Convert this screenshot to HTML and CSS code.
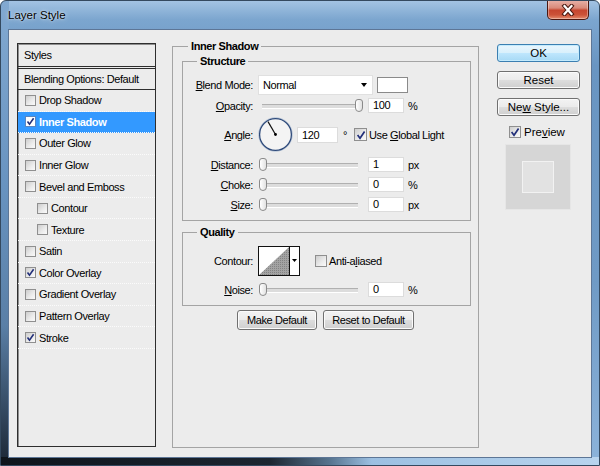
FILE: index.html
```html
<!DOCTYPE html>
<html>
<head>
<meta charset="utf-8">
<title>Layer Style</title>
<link rel="stylesheet" href="styles.css">
</head>
<body>
<div class="window">
  <div class="titlebar">
    <span class="title">Layer Style</span>
    <div class="close">
      <svg width="14" height="12" viewBox="0 0 14 12"><path d="M3.5 2 L10.5 10 M10.5 2 L3.5 10" stroke="#4a1a12" stroke-width="4.2" stroke-linecap="square"/><path d="M3.5 2 L10.5 10 M10.5 2 L3.5 10" stroke="#ffffff" stroke-width="2.2" stroke-linecap="square"/></svg>
    </div>
  </div>
  <div class="client">
    <div class="stylelist">
      <div class="sl-head">Styles</div>
      <div class="sl-blend">Blending Options: Default</div>
      <div class="sl-item"><span class="cb"></span>Drop Shadow</div>
      <div class="sl-item sel"><span class="cb on"><svg width="9" height="9" viewBox="0 0 9 9"><path d="M1.5 4.5 L3.5 7.2 L7.6 1.3" fill="none" stroke="#23307a" stroke-width="1.6"/></svg></span>Inner Shadow</div>
      <div class="sl-item"><span class="cb"></span>Outer Glow</div>
      <div class="sl-item"><span class="cb"></span>Inner Glow</div>
      <div class="sl-item"><span class="cb"></span>Bevel and Emboss</div>
      <div class="sl-item sub"><span class="cb"></span>Contour</div>
      <div class="sl-item sub"><span class="cb"></span>Texture</div>
      <div class="sl-item"><span class="cb"></span>Satin</div>
      <div class="sl-item"><span class="cb on"><svg width="9" height="9" viewBox="0 0 9 9"><path d="M1.5 4.5 L3.5 7.2 L7.6 1.3" fill="none" stroke="#23307a" stroke-width="1.6"/></svg></span>Color Overlay</div>
      <div class="sl-item"><span class="cb"></span>Gradient Overlay</div>
      <div class="sl-item"><span class="cb"></span>Pattern Overlay</div>
      <div class="sl-item"><span class="cb on"><svg width="9" height="9" viewBox="0 0 9 9"><path d="M1.5 4.5 L3.5 7.2 L7.6 1.3" fill="none" stroke="#23307a" stroke-width="1.6"/></svg></span>Stroke</div>
    </div>

    <fieldset class="outer">
      <legend>Inner Shadow</legend>
      <fieldset class="inner structure">
        <legend>Structure</legend>
        <div class="row r-blend">
          <span class="lbl"><u>B</u>lend Mode:</span>
          <div class="select"><span>Normal</span><span class="arrow"></span></div>
          <div class="swatch"></div>
        </div>
        <div class="row r-op">
          <span class="lbl"><u>O</u>pacity:</span>
          <div class="slider"><span class="thumb" style="left:97px"></span></div>
          <div class="num">100</div><span class="unit">%</span>
        </div>
        <div class="row r-angle">
          <span class="lbl"><u>A</u>ngle:</span>
          <svg class="dial" width="36" height="35" viewBox="0 0 36 35"><circle cx="17.5" cy="17.5" r="16.8" fill="#f4f4f4" stroke="#b7c4d6" stroke-width="1"/><circle cx="17.5" cy="17.5" r="15.9" fill="none" stroke="#2f4b7b" stroke-width="1.3"/><line x1="17.5" y1="17.5" x2="10" y2="4.6" stroke="#111" stroke-width="1.2"/><circle cx="17.5" cy="17.5" r="1.4" fill="#000"/></svg>
          <div class="num ang">120</div><span class="deg">°</span>
          <span class="cb big on"><svg width="10" height="10" viewBox="0 0 10 10"><path d="M1.6 5 L4 8.2 L8.6 1.4" fill="none" stroke="#23307a" stroke-width="1.7"/></svg></span><span class="cbl">Use <u>G</u>lobal Light</span>
        </div>
        <div class="row r-sl">
          <span class="lbl"><u>D</u>istance:</span>
          <div class="slider"><span class="thumb" style="left:1px"></span></div>
          <div class="num">1</div><span class="unit">px</span>
        </div>
        <div class="row r-sl">
          <span class="lbl"><u>C</u>hoke:</span>
          <div class="slider"><span class="thumb" style="left:1px"></span></div>
          <div class="num">0</div><span class="unit">%</span>
        </div>
        <div class="row r-sl">
          <span class="lbl"><u>S</u>ize:</span>
          <div class="slider"><span class="thumb" style="left:1px"></span></div>
          <div class="num">0</div><span class="unit">px</span>
        </div>
      </fieldset>

      <fieldset class="inner quality">
        <legend>Quality</legend>
        <div class="row r-contour">
          <span class="lbl">Contour:</span>
          <svg class="contour" width="42" height="30" viewBox="0 0 42 30"><defs><pattern id="dots" width="2" height="2" patternUnits="userSpaceOnUse"><rect width="2" height="2" fill="#a3a3a3"/><rect width="1" height="1" fill="#838383"/></pattern></defs><rect x="0.5" y="0.5" width="41" height="29" fill="#fff" stroke="#111"/><polygon points="1,29 31,1 31,29" fill="url(#dots)"/><line x1="31.5" y1="1" x2="31.5" y2="29" stroke="#111"/><polygon points="34,13 39,13 36.5,16" fill="#000"/></svg>
          <span class="cb big aa"></span><span class="cbl">Anti-a<u>l</u>iased</span>
        </div>
        <div class="row r-sl r-noise">
          <span class="lbl"><u>N</u>oise:</span>
          <div class="slider"><span class="thumb" style="left:1px"></span></div>
          <div class="num">0</div><span class="unit">%</span>
        </div>
      </fieldset>

      <div class="btnrow">
        <div class="btn btn-md">Make Default</div>
        <div class="btn btn-rd">Reset to Default</div>
      </div>
    </fieldset>

    <div class="side">
      <div class="btn sbtn ok">OK</div>
      <div class="btn sbtn">Reset</div>
      <div class="btn sbtn"><span>Ne<u>w</u> Style...</span></div>
      <div class="preview"><span class="cb pcb on"><svg width="10" height="10" viewBox="0 0 10 10"><path d="M1.6 5 L4 8.2 L8.6 1.4" fill="none" stroke="#23307a" stroke-width="1.7"/></svg></span><span>Pre<u>v</u>iew</span></div>
      <div class="pbox"><div class="pinner"></div></div>
    </div>
  </div>
</div>
</body>
</html>
```
FILE: styles.css
```css
* { box-sizing: border-box; }
html, body { margin: 0; padding: 0; background: #ffffff; }
body {
  width: 600px;
  height: 466px;
  overflow: hidden;
  font-family: "Liberation Sans", Arial, sans-serif;
  font-size: 11px;
  letter-spacing: -0.4px;
  color: #000;
}
u { text-decoration: underline; text-underline-offset: 1px; }

.window {
  width: 600px;
  height: 466px;
  border: 1px solid #34495f;
  border-radius: 6px 6px 0 0;
  display: flex;
  flex-direction: column;
  overflow: hidden;
  background:
    linear-gradient(90deg, #0e141b 0%, #1c2631 45%, #56748f 55%, #9cc0e2 62%, #b8d4ee 100%) left bottom / 100% 8px no-repeat,
    linear-gradient(180deg, #82a9d1 0%, #6893c0 40%, #5a7fa6 70%, #1b2634 100%) left top / 8px 100% no-repeat,
    linear-gradient(180deg, #a3c3e3 0%, #7ca6cf 4%, #6995c2 14%, #6f9ac5 60%, #8cb3da 100%);
}

.titlebar {
  height: 28px;
  flex: none;
  display: flex;
  align-items: flex-start;
  justify-content: space-between;
  padding-left: 7px;
}
.title {
  font-size: 11.5px;
  letter-spacing: 0;
  line-height: 28px;
  color: #000;
  text-shadow: 0 0 5px rgba(255,255,255,0.7), 0 0 2px rgba(255,255,255,0.6);
}
.close {
  width: 42px;
  height: 20px;
  margin-top: -1px;
  margin-right: 10px;
  border: 1px solid #4a1710;
  border-top: none;
  border-radius: 0 0 5px 5px;
  background: linear-gradient(180deg, #e8b3aa 0%, #d98a7a 42%, #c6462f 54%, #cc5238 78%, #e48c6e 100%);
  box-shadow: inset 0 0 0 1px rgba(255,255,255,0.35);
  display: flex;
  align-items: center;
  justify-content: center;
}
.close svg { display: block; }

.client {
  flex: 1;
  margin: 0 7px 7px 7px;
  background: #ececec;
  border: 1px solid #5d7696;
  display: flex;
  align-items: flex-start;
  padding: 10px 0 0 8px;
}

/* Styles list */
.stylelist {
  width: 139px;
  height: 404px;
  margin-top: 3px;
  flex: none;
  border: 1px solid #2e2e2e;
  box-shadow: inset 1px 1px 0 #8e8e8e;
  background: #ececec;
}
.sl-head {
  height: 25px;
  line-height: 22px;
  padding-left: 6px;
  border-bottom: 3px double #2e2e2e;
}
.sl-blend {
  height: 21px;
  line-height: 20px;
  padding-left: 6px;
  border-bottom: 1px solid #2e2e2e;
}
.sl-item {
  height: 21.58px;
  display: flex;
  align-items: center;
  padding-left: 7px;
  border-bottom: 1px dotted #fbfbfb;
}
.sl-item.sub { padding-left: 19px; }
.sl-item .cb { margin-right: 3px; }
.sl-item.sel { background: #3399ff; color: #fff; font-weight: bold; }
.sl-item.sel .cb { background: #fff; border-color: #5a86c0; }

.cb {
  width: 11px;
  height: 11px;
  flex: none;
  border: 1px solid #8f8f8f;
  background: linear-gradient(135deg, #cdcdcd 0%, #ececec 60%, #fafafa 100%);
  display: inline-flex;
  align-items: center;
  justify-content: center;
}
.cb svg { display: block; }
.cb.big { width: 13px; height: 13px; }

/* fieldsets */
fieldset {
  margin: 0;
  padding: 0;
  min-width: 0;
  border: 1px solid #a4a4a4;
}
legend {
  padding: 0 3px;
  margin-left: 14px;
  font-weight: bold;
  line-height: 12px;
}
.outer {
  width: 307px;
  height: 408px;
  margin-left: 16px;
  flex: none;
}
.outer > legend { margin-left: 15px; }
.structure {
  width: 289px;
  margin: 3px 0 0 9px;
  padding: 8px 0 8px 0;
}
.quality {
  width: 289px;
  margin: 5px 0 0 9px;
  padding: 8px 0 8px 0;
}

.row { display: flex; align-items: center; }
.lbl {
  width: 70px;
  flex: none;
  text-align: right;
  margin-right: 5px;
}
.r-blend { height: 20px; }
.r-op { height: 15px; margin-top: 3px; }
.r-angle { height: 35px; margin-top: 4px; }
.r-sl { height: 15px; margin-top: 5px; }
.r-noise { margin-top: 6px; }
.r-contour { height: 30px; }

.select {
  width: 115px;
  height: 20px;
  flex: none;
  background: #fff;
  border: 1px solid #e0e0e0;
  display: flex;
  align-items: center;
  justify-content: space-between;
  padding: 0 5px 0 4px;
}
.arrow {
  width: 0;
  height: 0;
  border-left: 3.5px solid transparent;
  border-right: 3.5px solid transparent;
  border-top: 4px solid #000;
}
.swatch {
  width: 31px;
  height: 16px;
  margin-left: 4px;
  flex: none;
  background: #fff;
  border: 1px solid #8a8a8a;
}

.slider {
  width: 110px;
  height: 15px;
  flex: none;
  position: relative;
}
.slider::before {
  content: "";
  position: absolute;
  left: 4px;
  top: 6px;
  width: 96px;
  height: 3px;
  border-top: 1px solid #b0b0b0;
  border-bottom: 1px solid #ffffff;
  background: #dcdcdc;
}
.thumb {
  position: absolute;
  top: 1px;
  width: 8px;
  height: 13px;
  border: 1px solid #8a8a8a;
  border-radius: 3px 3px 4px 4px;
  background: linear-gradient(90deg, #ffffff, #e2e2e2);
}
.num {
  width: 36px;
  height: 15px;
  flex: none;
  background: #fff;
  border: 1px solid #dcdcdc;
  padding-left: 4px;
  line-height: 13px;
}
.unit { margin-left: 4px; }
.dial { display: block; flex: none; }
.num.ang { width: 41px; height: 16px; line-height: 14px; margin-left: 3px; }
.deg { margin-left: 5px; width: 4px; }
.r-angle .cb { margin-left: 7px; }
.cbl { margin-left: 2px; }
.contour { display: block; flex: none; }
.cb.aa { margin-left: 15px; width: 12px; height: 12px; }

.btnrow {
  display: flex;
  justify-content: center;
  gap: 6px;
  margin-top: 4px;
}
.btn {
  height: 20px;
  border: 1px solid #707070;
  border-radius: 3px;
  background: linear-gradient(180deg, #f3f3f3 0%, #ebebeb 48%, #dddddd 52%, #cfcfcf 100%);
  box-shadow: inset 0 0 0 1px #fbfbfb;
  display: flex;
  align-items: center;
  justify-content: center;
}
.btn-md { width: 80px; }
.btn-rd { width: 91px; }

/* right column */
.side {
  width: 83px;
  margin: 4px 0 0 18px;
  flex: none;
  display: flex;
  flex-direction: column;
  font-size: 11.5px;
  letter-spacing: 0;
}
.sbtn { height: 18px; }
.sbtn + .sbtn { margin-top: 9px; }
.ok {
  border-color: #3c7fb1;
  background: linear-gradient(180deg, #eaf6fd 0%, #d9f0fc 48%, #bee6fd 52%, #a7d9f5 100%);
  box-shadow: inset 0 0 0 1px #c4ebfd;
}
.preview {
  display: flex;
  align-items: center;
  height: 12px;
  margin: 10px 0 0 12px;
}
.pcb { width: 12px; height: 12px; margin-right: 3px; }
.pbox {
  width: 66px;
  height: 66px;
  margin: 6px 0 0 8px;
  background: #d6d6d6;
  border: 1px solid #e6e6e6;
  display: flex;
  align-items: center;
  justify-content: center;
}
.pinner {
  width: 32px;
  height: 32px;
  background: #e2e2e2;
  border: 1px solid #f2f2f2;
}
```
